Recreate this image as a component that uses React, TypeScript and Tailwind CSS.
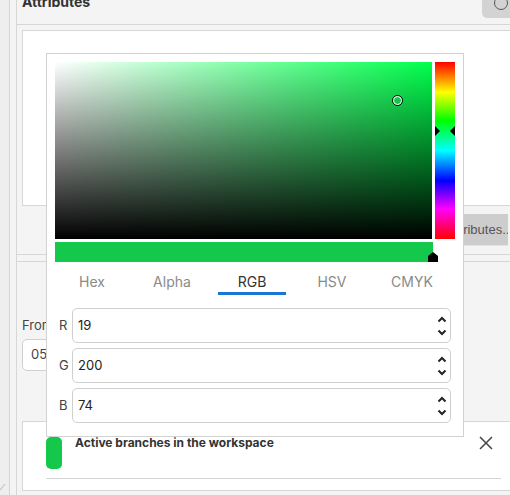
import React from "react";

const tabs = ["Hex", "Alpha", "RGB", "HSV", "CMYK"];
const channels = [
  { label: "R", value: "19" },
  { label: "G", value: "200" },
  { label: "B", value: "74" },
];

function Spinner() {
  return (
    <svg width="10" height="22" viewBox="0 0 10 22" className="shrink-0">
      <path d="M1.5 6.5 L5 3 L8.5 6.5" fill="none" stroke="#222" strokeWidth="2" />
      <path d="M1.5 15.5 L5 19 L8.5 15.5" fill="none" stroke="#222" strokeWidth="2" />
    </svg>
  );
}

function ColorPicker() {
  return (
    <div className="absolute left-[46px] top-[53px] w-[418px] h-[384px] bg-white border border-[#d2d2d2] p-2">
      <div className="flex gap-[3px]">
        <div className="relative w-[378px] h-[177px] bg-[linear-gradient(to_right,#ffffff,#00ff4c)]">
          <div className="absolute inset-0 bg-[linear-gradient(to_bottom,rgba(0,0,0,0),#000000)]" />
          <div className="absolute left-[337px] top-[33px] w-[11px] h-[11px] rounded-full border border-black">
            <div className="w-full h-full rounded-full border border-white" />
          </div>
        </div>
        <div className="relative w-[20px] h-[177px] bg-[linear-gradient(to_bottom,#ff0000,#ffff00_17%,#00ff00_33%,#00ffff_50%,#0000ff_67%,#ff00ff_83%,#ff0000)]">
          <div className="absolute left-0 top-[64px] w-0 h-0 border-y-[5px] border-y-transparent border-l-[5px] border-l-black" />
          <div className="absolute right-0 top-[64px] w-0 h-0 border-y-[5px] border-y-transparent border-r-[5px] border-r-black" />
        </div>
      </div>
      <div className="relative mt-[3px] w-[378px] h-[20px] bg-[#13c84a]">
        <svg className="absolute left-[373px] top-[10px]" width="10" height="10" viewBox="0 0 10 10">
          <path d="M5 0 L10 4 L10 10 L0 10 L0 4 Z" fill="#000" />
        </svg>
      </div>
      <div className="flex ml-[-3px] w-[400px] h-[33px]">
        {tabs.map((t) => (
          <div key={t} className="flex-1 flex flex-col items-center">
            <div
              className={
                "mt-[10px] h-[20px] text-[14px] leading-[20px] " +
                (t === "RGB" ? "text-[#333333]" : "text-[#8a8a8a]")
              }
            >
              {t}
            </div>
            {t === "RGB" ? <div className="w-[68px] h-[4px] bg-[#1976d2]" /> : null}
          </div>
        ))}
      </div>
      <div className="mt-[13px] flex flex-col gap-[5px]">
        {channels.map((c) => (
          <div key={c.label} className="flex items-center">
            <div className="w-[17px] pl-[4px] text-[13px] text-[#444]">{c.label}</div>
            <div className="w-[379px] h-[35px] rounded-[5px] border border-[#cfcfcf] flex items-center pl-[5px] pr-[3px]">
              <span className="flex-1 text-[13px] text-[#222]">{c.value}</span>
              <Spinner />
            </div>
          </div>
        ))}
      </div>
    </div>
  );
}

export default function App() {
  return (
    <div className="relative w-[510px] h-[495px] overflow-hidden flex bg-[#eeeeee] font-['Inter','Noto_Sans',sans-serif]">
      <div className="relative w-[10px] shrink-0 bg-[#eeeeee] border-r border-[#d6d6d6]">
        <svg className="absolute left-0 top-[483px]" width="6" height="8" viewBox="0 0 6 8">
          <path d="M0 7 L5 1" stroke="#b5b5b5" strokeWidth="1" />
        </svg>
      </div>
      <div className="w-[7px] shrink-0 bg-[#f4f4f4] border-r border-[#d6d6d6]" />
      <div className="flex-1 flex flex-col bg-[#f4f4f4]">
        <div className="relative h-[25px] shrink-0 border-b border-[#d6d6d6] pl-[5px]">
          <div className="mt-[-8px] text-[14px] leading-[20px] font-bold text-[#333]">Attributes</div>
          <div className="absolute left-[465px] top-[-8px] w-[40px] h-[26px] rounded-[5px] bg-[#d3d3d3]">
            <div className="absolute left-[12px] top-[4px] w-[14px] h-[14px] rounded-full border border-[#555]" />
          </div>
        </div>
        <div className="mt-[5px] ml-[5px] mr-[-10px] h-[176px] shrink-0 bg-white border border-[#d6d6d6]" />
        <div className="mt-[8px] flex justify-end">
          <div className="mr-[2px] h-[32px] w-[140px] bg-[#cdcdcd] border-b border-[#e4e4e4] flex items-center justify-end overflow-hidden">
            <span className="mr-[-5px] font-['Liberation_Sans',sans-serif] text-[13px] text-[#555] whitespace-nowrap">
              Edit attributes...
            </span>
          </div>
        </div>
        <div className="mt-[8px] h-[8px] shrink-0 border-y border-[#d6d6d6]" />
        <div className="pl-[5px] pt-[55px] h-[159px] shrink-0">
          <div className="text-[13px] leading-[16px] text-[#444]">From</div>
          <div className="mt-[6px] w-[120px] h-[32px] rounded-[5px] border border-[#d0d0d0] bg-white flex items-center pl-[8px] text-[13px] text-[#444]">
            05
          </div>
        </div>
        <div className="ml-[5px] h-[70px] shrink-0 bg-white border-y border-l border-[#d6d6d6] pl-[23px] pt-[15px] pr-[9px]">
          <div className="flex items-start border-b border-[#d6d6d6] h-[42px]">
            <div className="w-[16px] h-[32px] rounded-[5px] bg-[#13c84a] shrink-0" />
            <div className="ml-[13px] mt-[-2px] flex-1 text-[12px] leading-[16px] font-bold text-[#333]">
              Active branches in the workspace
            </div>
            <svg className="mt-[-1px] mr-[8px]" width="14" height="14" viewBox="0 0 14 14">
              <path d="M1 1 L13 13 M13 1 L1 13" stroke="#444" strokeWidth="1.5" />
            </svg>
          </div>
        </div>
      </div>
      <ColorPicker />
    </div>
  );
}
